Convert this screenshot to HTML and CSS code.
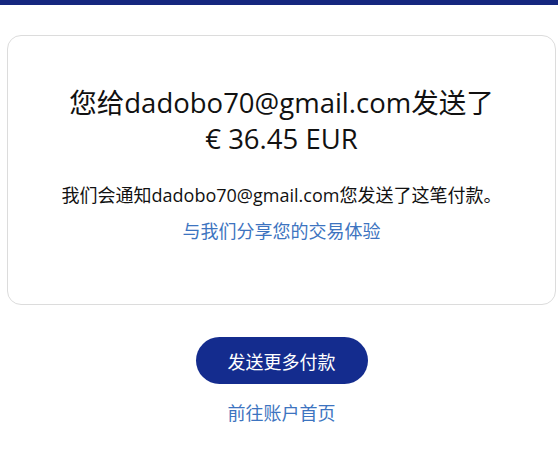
FILE: index.html
```html
<!DOCTYPE html>
<html lang="zh">
<head>
  <title>付款已发送</title>
  <meta charset="utf-8">
  <meta name="viewport" content="width=device-width, initial-scale=1">
  <link rel="stylesheet" href="styles.css">
</head>
<body>
  <!-- top bar -->
  <div class="top-bar"></div>

  <!-- wrapper -->
  <div id="wrapper">
    <div class="card">
      <h1 class="title">您给dadobo70@gmail.com发送了<br>€ 36.45 EUR</h1>
      <p class="note">我们会通知dadobo70@gmail.com您发送了这笔付款。</p>
      <a class="link" href="#">与我们分享您的交易体验</a>
    </div>

    <div class="actions">
      <button class="btn-primary">发送更多付款</button>
      <a class="link" href="#">前往账户首页</a>
    </div>
  </div>
  <!-- end of wrapper -->
</body>
</html>
```

FILE: styles.css
```css
body {
  margin: 0;
  background: #fff;
  color: #111;
  font-family: "Open Sans", "Noto Sans CJK SC", sans-serif;
}
.top-bar {
  height: 5px;
  background-color: #15277f;
}
#wrapper {
  padding: 30px 2px 0 7px;
}
.card {
  border: 1px solid #dcdcdc;
  border-radius: 14px;
  height: 270px;
  box-sizing: border-box;
  text-align: center;
  padding-top: 49px;
}
.title {
  margin: 0;
  font-size: 27.5px;
  font-weight: normal;
  line-height: 36px;
}
.note {
  margin: 26px 0 0;
  font-size: 18px;
  line-height: 24px;
}
.link {
  display: inline-block;
  margin-top: 12px;
  color: #3d74c0;
  font-size: 18px;
  line-height: 24px;
  text-decoration: none;
}
.actions {
  display: flex;
  flex-direction: column;
  align-items: center;
  padding-top: 32px;
}
.btn-primary {
  width: 172px;
  height: 47px;
  border: 0;
  border-radius: 24px;
  background-color: #142c8e;
  color: #fff;
  font-family: inherit;
  font-size: 18px;
  cursor: pointer;
}
.actions .link {
  margin-top: 17px;
}
```
